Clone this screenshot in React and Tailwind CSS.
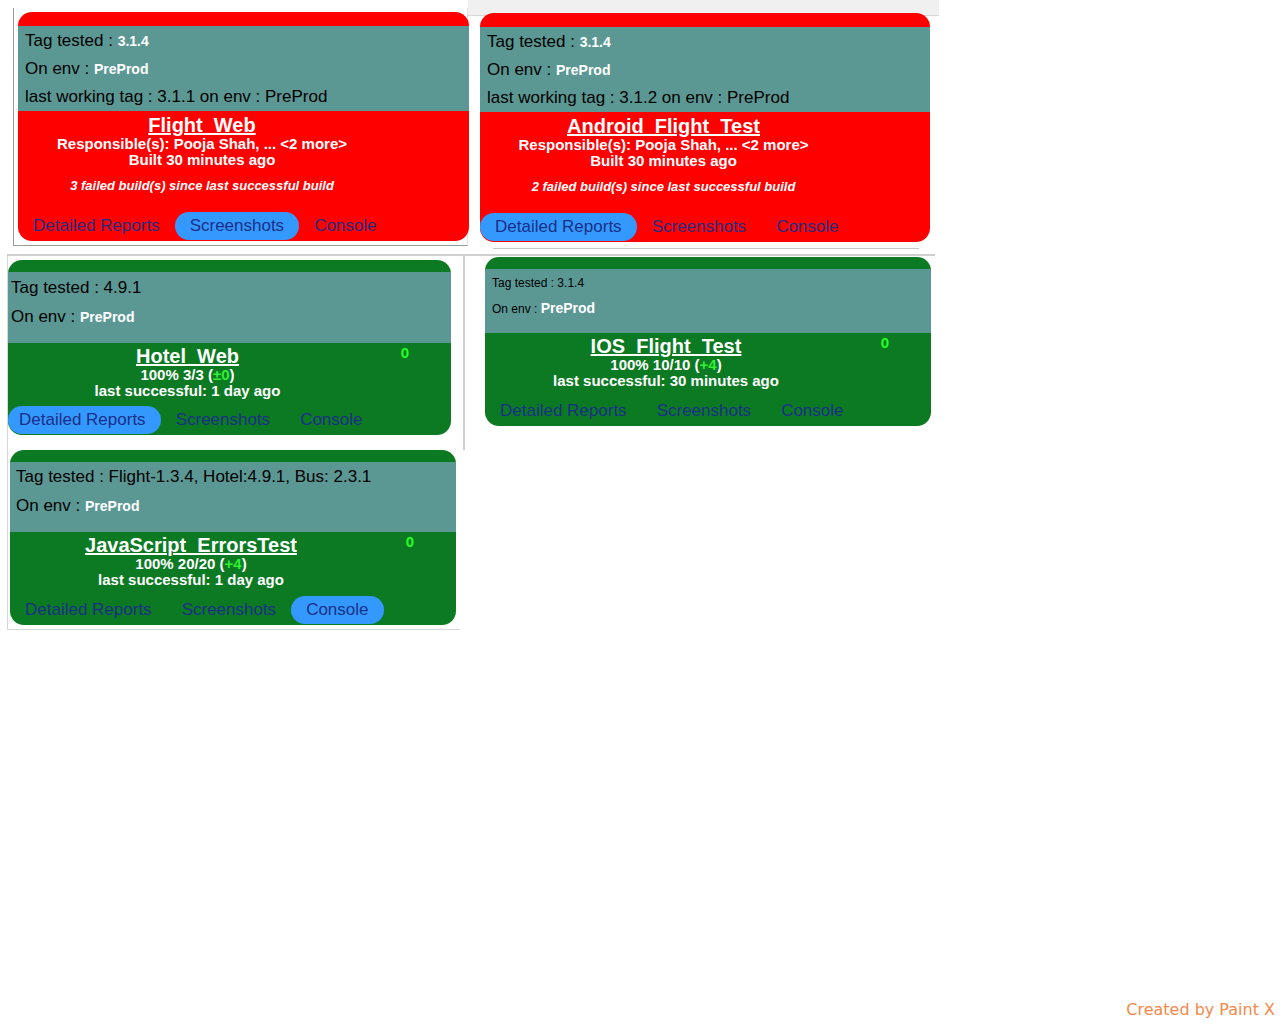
import React from 'react';

const font = { fontFamily: '"Liberation Sans", Arial, sans-serif' };

const Info = ({ children, className = '' }) => (
  <div className={`bg-[#5b9894] text-black ${className}`}>{children}</div>
);

const Value = ({ children }) => <span className="text-[14px] font-bold text-white">{children}</span>;

const Links = ({ active, first = 15 }) => {
  const items = ['Detailed Reports', 'Screenshots', 'Console'];
  return (
    <div className="flex h-[28px] items-center text-[17px] text-[#1b2f86]">
      {items.map((label, i) => (
        <span
          key={label}
          className={`flex h-[28px] items-center rounded-full pr-[15px] ${i === 0 && first !== 15 ? 'pl-[11px]' : 'pl-[15px]'} ${
            active === label ? 'bg-[#3399ff]' : ''
          }`}
        >
          {label}
        </span>
      ))}
    </div>
  );
};

const FailedCard = ({ name, lastTag, failed, active, className = '' }) => (
  <div className={`flex h-[229px] flex-col overflow-hidden rounded-[14px] bg-[#ff0000] ${className}`}>
    <div className="h-[14px] shrink-0" />
    <Info className="h-[85px] shrink-0 px-[7px] pt-[1px] text-[17px] leading-[27px]">
      <div>
        Tag tested : <Value>3.1.4</Value>
      </div>
      <div>
        On env : <Value>PreProd</Value>
      </div>
      <div>last working tag : {lastTag} on env : PreProd</div>
    </Info>
    <div className="flex flex-1 flex-col">
      <div className="flex flex-1">
        <div className="flex flex-1 flex-col items-center pt-[3px] text-white">
          <div className="text-[20px] font-bold leading-[22px] underline">{name}</div>
          <div className="text-[15px] font-bold leading-[16px]">Responsible(s): Pooja Shah, ... &lt;2 more&gt;</div>
          <div className="text-[15px] font-bold leading-[16px]">Built 30 minutes ago</div>
          <div className="mt-[10px] text-[13px] font-bold italic leading-[16px]">
            {failed} failed build(s) since last successful build
          </div>
        </div>
        <div className="w-[83px]" />
      </div>
      <div className="pb-[1px]">
        <Links active={active} />
      </div>
    </div>
  </div>
);

const PassedCard = ({ name, info, stats, delta, last, active, first, className = '', infoClass = '' }) => (
  <div className={`flex flex-col overflow-hidden rounded-[14px] bg-[#0b7a23] ${className}`}>
    <div className="h-[12px] shrink-0" />
    <Info className={`shrink-0 ${infoClass}`}>{info}</Info>
    <div className="flex flex-1 flex-col">
      <div className="flex">
        <div className="flex flex-1 flex-col items-center pt-[2px] text-white">
          <div className="text-[20px] font-bold leading-[22px] underline">{name}</div>
          <div className="text-[15px] font-bold leading-[16px]">
            {stats} (<span className="text-[#33ee33]">{delta}</span>)
          </div>
          <div className="text-[15px] font-bold leading-[16px]">last successful: {last}</div>
        </div>
        <div className="flex w-[84px] justify-center pr-[8px] text-[15px] font-bold leading-[20px] text-[#22ff22]">0</div>
      </div>
      <div className="mt-auto pb-[1px]">
        <Links active={active} first={first} />
      </div>
    </div>
  </div>
);

export default function App() {
  return (
    <div className="relative h-[1024px] w-[1280px] overflow-hidden bg-white" style={font}>
      <div className="flex items-start">
        <div className="ml-[13px] mt-[8px] w-[455px] border-b border-l border-r border-[#9a9a9a] border-r-[#e2e2e2] pb-[4px] pl-[4px] pt-[4px]">
          <FailedCard name="Flight_Web" lastTag="3.1.1" failed={3} active="Screenshots" className="w-[451px]" />
        </div>
        <div className="w-[471px]">
          <div className="h-[16px] border-b border-[#d8d8d8] bg-[#f0f0f0]" />
          <div className="-mt-[3px] flex pl-[12px]">
            <FailedCard
              name="Android_Flight_Test"
              lastTag="3.1.2"
              failed={2}
              active="Detailed Reports"
              className="relative w-[450px]"
            />
          </div>
          <div className="ml-[25px] mt-[6px] h-[1px] w-[426px] bg-[#c8c8c8]" />
        </div>
      </div>

      <div className="ml-[7px] mt-[5px] flex w-[928px] items-start border-t-2 border-[#cfcfcf]">
        <div className="w-[453px] border-b border-l border-[#d6d6d6] pb-[4px] pt-[4px]">
          <PassedCard
            className="h-[175px] w-[443px]"
            infoClass="h-[71px] px-[3px] pt-[1px] text-[17px] leading-[29px]"
            first={11}
            name="Hotel_Web"
            stats="100% 3/3"
            delta="±0"
            last="1 day ago"
            active="Detailed Reports"
            info={
              <>
                <div>Tag tested : 4.9.1</div>
                <div>
                  On env : <Value>PreProd</Value>
                </div>
              </>
            }
          />
          <PassedCard
            className="ml-[2px] mt-[15px] h-[175px] w-[446px]"
            infoClass="h-[70px] px-[6px] text-[17px] leading-[29px]"
            name="JavaScript_ErrorsTest"
            stats="100% 20/20"
            delta="+4"
            last="1 day ago"
            active="Console"
            info={
              <>
                <div>Tag tested : Flight-1.3.4, Hotel:4.9.1, Bus: 2.3.1</div>
                <div>
                  On env : <Value>PreProd</Value>
                </div>
              </>
            }
          />
        </div>
        <div className="ml-[3px] h-[194px] w-[2px] bg-[#d0d0d0]" />
        <PassedCard
          className="ml-[20px] mt-[1px] h-[169px] w-[446px]"
          infoClass="h-[64px] px-[7px] pt-[2px] text-[12px] leading-[25px]"
          name="IOS_Flight_Test"
          stats="100% 10/10"
          delta="+4"
          last="30 minutes ago"
          info={
            <>
              <div>Tag tested : 3.1.4</div>
              <div>
                On env : <Value>PreProd</Value>
              </div>
            </>
          }
        />
      </div>

      <div
        className="absolute bottom-[2px] right-[5px] text-[16px] text-[#f5894a]"
        style={{ fontFamily: '"DejaVu Sans", Verdana, sans-serif' }}
      >
        Created by Paint X
      </div>
    </div>
  );
}
